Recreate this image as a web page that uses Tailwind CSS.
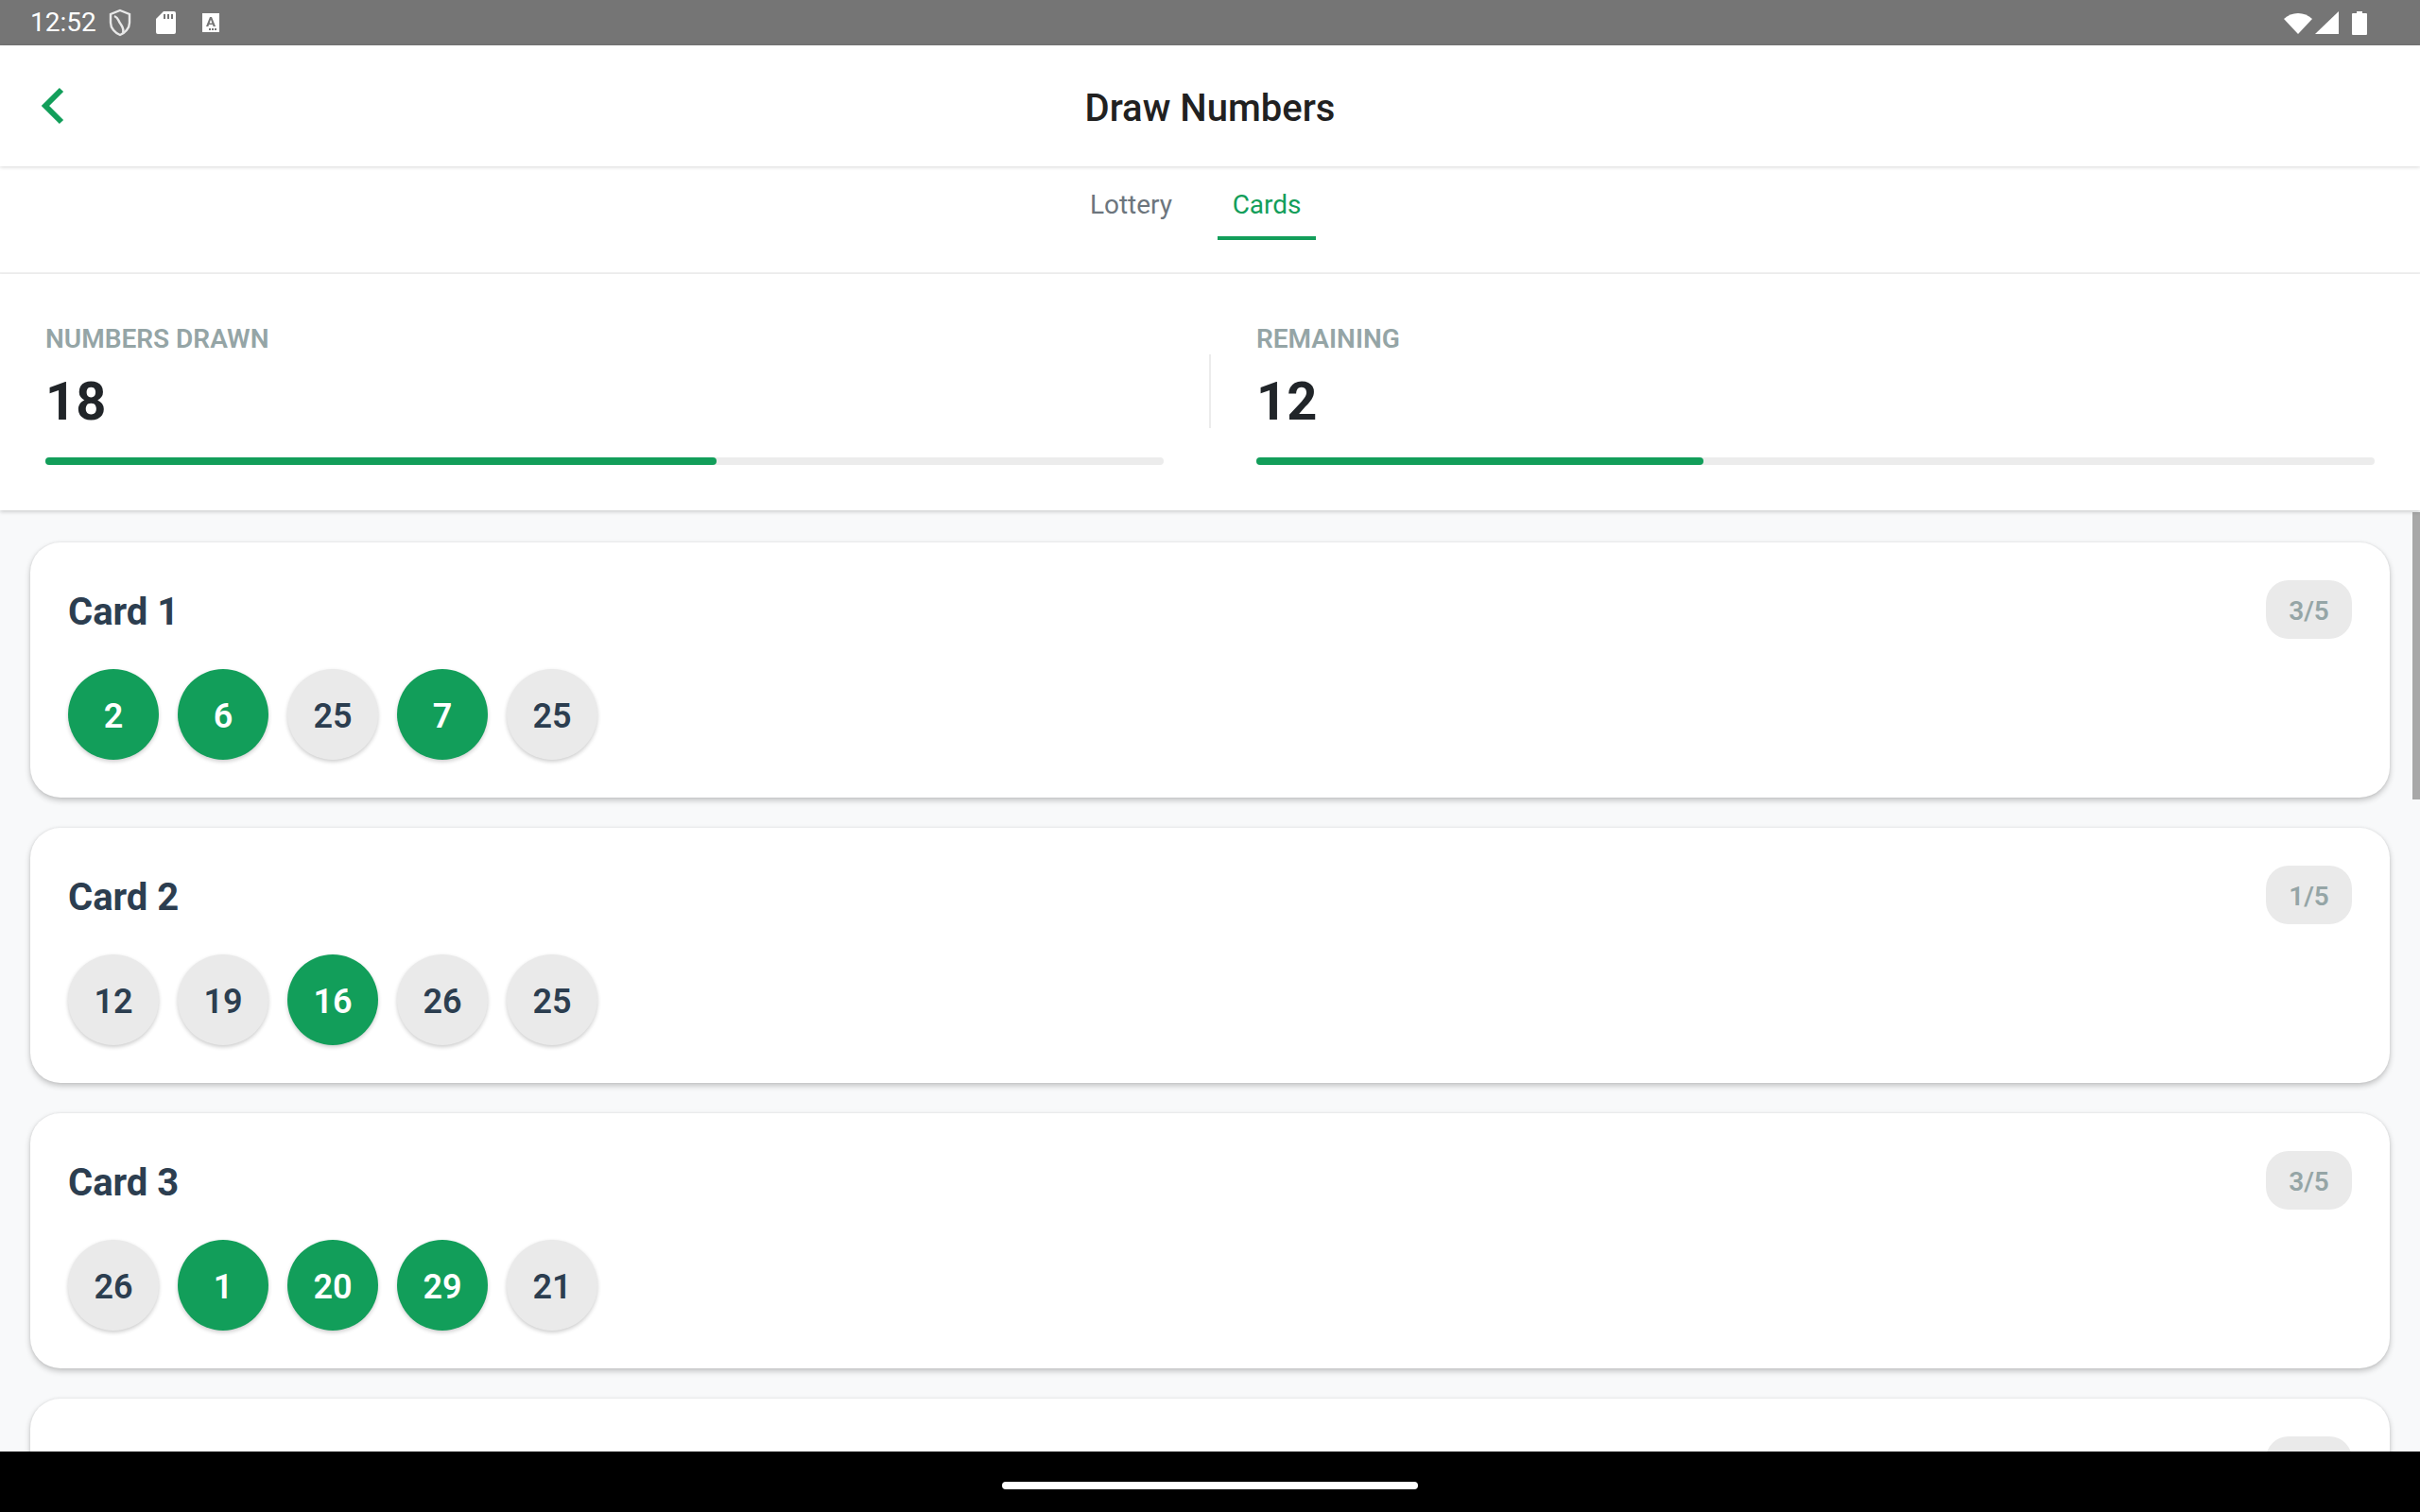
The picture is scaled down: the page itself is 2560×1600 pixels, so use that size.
<!DOCTYPE html>
<html lang="en">
  <head>
    <meta charset="utf-8" />
    <title>Draw Numbers</title>
    <script src="https://cdn.jsdelivr.net/npm/@tailwindcss/browser@4"></script>
  </head>
  <body class="font-['Roboto',sans-serif] bg-[#f8f9fa]">
    <div class="relative flex flex-col w-[2560px] h-[1600px] overflow-hidden">
      <!-- status bar -->
      <div class="flex items-center justify-between shrink-0 h-12 bg-[#757575] pl-[32px] pr-[56px] text-white">
        <div class="flex items-center">
          <span class="text-[28px] leading-none">12:52</span>
          <svg class="ml-[13px]" width="24" height="30" viewBox="0 0 24 30" fill="none" stroke="#e8e8e8" stroke-width="2.4"><path d="M12 2 L22 6 V15 C22 21 17 26 12 28 C7 26 2 21 2 15 V6 Z" /><path d="M6 8 C11 10 9 12 13 17 C15 20 16 23 15 26" /></svg>
          <svg class="ml-[25px]" width="22" height="26" viewBox="0 0 22 26"><path fill="#fff" fill-rule="evenodd" d="M9 1 H20 a2 2 0 0 1 2 2 V23 a2 2 0 0 1 -2 2 H3 a2 2 0 0 1 -2 -2 V9 Z M9 4 V9 H11 V4 Z M13 4 V9 H15 V4 Z M17 4 V9 H19 V4 Z" /></svg>
          <svg class="ml-[27px]" width="20" height="22" viewBox="0 0 20 22"><path fill="#fff" fill-rule="evenodd" d="M1 1 H19 V21 H1 Z M9 5 L5 15 H7.4 L8 13 H12 L12.6 15 H15 L11 5 Z M10 7.8 L11.4 11.4 H8.6 Z M11 17 V19 H13 V17 Z M14 17 V19 H16 V17 Z M8 17 V19 H10 V17 Z" /></svg>
        </div>
        <div class="flex items-center">
          <svg width="30" height="24" viewBox="0 0 30 24"><path fill="#fff" d="M0 8 C8 0 22 0 30 8 L15 24 Z" /></svg>
          <svg class="ml-[3px]" width="25" height="24" viewBox="0 0 25 24"><path fill="#fff" d="M25 0 V24 H0 Z" /></svg>
          <svg class="ml-[14px]" width="16" height="25" viewBox="0 0 16 25"><path fill="#fff" d="M5 0 H11 V2 H15 a1 1 0 0 1 1 1 V24 a1 1 0 0 1 -1 1 H1 a1 1 0 0 1 -1 -1 V3 a1 1 0 0 1 1 -1 H5 Z" /></svg>
        </div>
      </div>

      <!-- header -->
      <header class="relative z-20 flex items-center justify-center shrink-0 h-[128px] bg-white shadow-[0_1px_4px_rgba(0,0,0,0.16)]">
        <svg class="absolute left-[42px] top-[44px]" width="28" height="40" viewBox="0 0 28 40" fill="none" stroke="#129e5a" stroke-width="6"><path d="M23 3 L6 20 L23 37" /></svg>
        <h1 class="pt-[6px] text-[40px] font-medium text-[#212121]">Draw Numbers</h1>
      </header>

      <!-- tabs -->
      <nav class="flex justify-center shrink-0 h-[114px] bg-white border-b-2 border-[#f0f0f0] pt-[16px] pr-[31px] text-[28px]">
        <a class="h-[62px] px-4 mr-[32px] leading-[50px] text-[#6c757d]">Lottery</a>
        <a class="w-[104px] h-[62px] text-center leading-[50px] text-[#129e5a] border-b-4 border-[#129e5a]">Cards</a>
      </nav>

      <!-- stats -->
      <section class="relative z-10 flex shrink-0 h-[250px] bg-white px-12 pt-[51px] shadow-[0_2px_4px_rgba(0,0,0,0.16)]">
        <div class="flex-1">
          <p class="text-[28px] font-semibold leading-[36px] text-[#95a5a6]">NUMBERS DRAWN</p>
          <p class="mt-[15px] text-[56px] font-bold leading-[66px] text-[#212529]">18</p>
          <div class="mt-[26px] h-2 rounded-full bg-[#ececec]"><div class="h-2 rounded-full bg-[#129e5a]" style="width: 60%"></div></div>
        </div>
        <div class="mx-[48px] mt-[34px] w-[2px] h-[78px] bg-[#ececec]"></div>
        <div class="flex-1">
          <p class="text-[28px] font-semibold leading-[36px] text-[#95a5a6]">REMAINING</p>
          <p class="mt-[15px] text-[56px] font-bold leading-[66px] text-[#212529]">12</p>
          <div class="mt-[26px] h-2 rounded-full bg-[#ececec]"><div class="h-2 rounded-full bg-[#129e5a]" style="width: 40%"></div></div>
        </div>
      </section>

      <!-- cards -->
      <main class="flex-1 overflow-hidden flex flex-col gap-8 pt-[34px] px-8 bg-[#f8f9fa]">
        <article class="shrink-0 h-[270px] rounded-[32px] bg-white p-10 shadow-[0_3px_6px_rgba(0,0,0,0.22),0_0_3px_rgba(0,0,0,0.08)]">
          <div class="flex items-center justify-between h-[62px]">
            <h2 class="pt-[6px] text-[40px] font-bold text-[#2c3e50]">Card 1</h2>
            <span class="flex items-center justify-center w-[91px] h-[62px] pt-[3px] rounded-[24px] bg-[#eaeaea] text-[28px] font-semibold text-[#95a5a6]">3/5</span>
          </div>
          <div class="flex gap-5 mt-8 text-[36px] font-semibold">
            <span class="flex items-center justify-center w-24 h-24 pt-1 rounded-full bg-[#129e5a] text-white shadow-[0_2px_4px_rgba(0,0,0,0.2)]">2</span>
            <span class="flex items-center justify-center w-24 h-24 pt-1 rounded-full bg-[#129e5a] text-white shadow-[0_2px_4px_rgba(0,0,0,0.2)]">6</span>
            <span class="flex items-center justify-center w-24 h-24 pt-1 rounded-full bg-[#eaeaea] text-[#2c3e50] shadow-[0_2px_4px_rgba(0,0,0,0.2)]">25</span>
            <span class="flex items-center justify-center w-24 h-24 pt-1 rounded-full bg-[#129e5a] text-white shadow-[0_2px_4px_rgba(0,0,0,0.2)]">7</span>
            <span class="flex items-center justify-center w-24 h-24 pt-1 rounded-full bg-[#eaeaea] text-[#2c3e50] shadow-[0_2px_4px_rgba(0,0,0,0.2)]">25</span>
          </div>
        </article>
        <article class="shrink-0 h-[270px] rounded-[32px] bg-white p-10 shadow-[0_3px_6px_rgba(0,0,0,0.22),0_0_3px_rgba(0,0,0,0.08)]">
          <div class="flex items-center justify-between h-[62px]">
            <h2 class="pt-[6px] text-[40px] font-bold text-[#2c3e50]">Card 2</h2>
            <span class="flex items-center justify-center w-[91px] h-[62px] pt-[3px] rounded-[24px] bg-[#eaeaea] text-[28px] font-semibold text-[#95a5a6]">1/5</span>
          </div>
          <div class="flex gap-5 mt-8 text-[36px] font-semibold">
            <span class="flex items-center justify-center w-24 h-24 pt-1 rounded-full bg-[#eaeaea] text-[#2c3e50] shadow-[0_2px_4px_rgba(0,0,0,0.2)]">12</span>
            <span class="flex items-center justify-center w-24 h-24 pt-1 rounded-full bg-[#eaeaea] text-[#2c3e50] shadow-[0_2px_4px_rgba(0,0,0,0.2)]">19</span>
            <span class="flex items-center justify-center w-24 h-24 pt-1 rounded-full bg-[#129e5a] text-white shadow-[0_2px_4px_rgba(0,0,0,0.2)]">16</span>
            <span class="flex items-center justify-center w-24 h-24 pt-1 rounded-full bg-[#eaeaea] text-[#2c3e50] shadow-[0_2px_4px_rgba(0,0,0,0.2)]">26</span>
            <span class="flex items-center justify-center w-24 h-24 pt-1 rounded-full bg-[#eaeaea] text-[#2c3e50] shadow-[0_2px_4px_rgba(0,0,0,0.2)]">25</span>
          </div>
        </article>
        <article class="shrink-0 h-[270px] rounded-[32px] bg-white p-10 shadow-[0_3px_6px_rgba(0,0,0,0.22),0_0_3px_rgba(0,0,0,0.08)]">
          <div class="flex items-center justify-between h-[62px]">
            <h2 class="pt-[6px] text-[40px] font-bold text-[#2c3e50]">Card 3</h2>
            <span class="flex items-center justify-center w-[91px] h-[62px] pt-[3px] rounded-[24px] bg-[#eaeaea] text-[28px] font-semibold text-[#95a5a6]">3/5</span>
          </div>
          <div class="flex gap-5 mt-8 text-[36px] font-semibold">
            <span class="flex items-center justify-center w-24 h-24 pt-1 rounded-full bg-[#eaeaea] text-[#2c3e50] shadow-[0_2px_4px_rgba(0,0,0,0.2)]">26</span>
            <span class="flex items-center justify-center w-24 h-24 pt-1 rounded-full bg-[#129e5a] text-white shadow-[0_2px_4px_rgba(0,0,0,0.2)]">1</span>
            <span class="flex items-center justify-center w-24 h-24 pt-1 rounded-full bg-[#129e5a] text-white shadow-[0_2px_4px_rgba(0,0,0,0.2)]">20</span>
            <span class="flex items-center justify-center w-24 h-24 pt-1 rounded-full bg-[#129e5a] text-white shadow-[0_2px_4px_rgba(0,0,0,0.2)]">29</span>
            <span class="flex items-center justify-center w-24 h-24 pt-1 rounded-full bg-[#eaeaea] text-[#2c3e50] shadow-[0_2px_4px_rgba(0,0,0,0.2)]">21</span>
          </div>
        </article>
        <article class="shrink-0 h-[270px] rounded-[32px] bg-white p-10 shadow-[0_3px_6px_rgba(0,0,0,0.22),0_0_3px_rgba(0,0,0,0.08)]">
          <div class="flex items-center justify-end h-[62px]">
            <span class="w-[91px] h-[62px] rounded-[24px] bg-[#eaeaea]"></span>
          </div>
        </article>
      </main>

      <!-- scrollbar -->
      <div class="absolute right-0 top-[542px] w-2 h-[304px] bg-[#a8a8a8]"></div>

      <!-- nav bar -->
      <div class="relative flex items-center justify-center shrink-0 h-16 bg-black">
        <div class="w-[440px] h-2 mt-[8px] rounded-full bg-white"></div>
      </div>
    </div>
  </body>
</html>
